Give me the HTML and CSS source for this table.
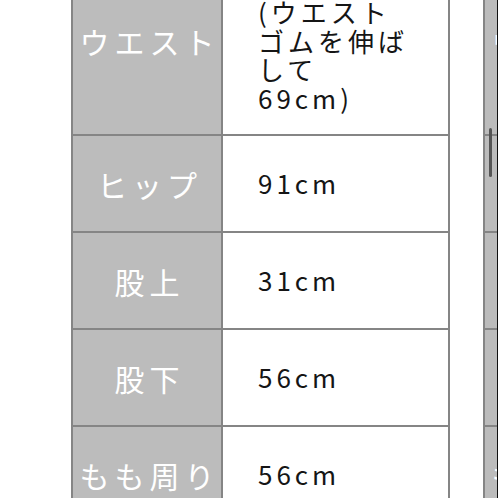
FILE: index.html
```html
<!DOCTYPE html>
<html lang="ja">
<head>
    <meta charset="UTF-8">
    <title>サイズ表</title>
    <link rel="stylesheet" href="styles.css">
</head>
<body>
<div class="page">
    <div class="size-table">
        <div class="label row-tall">ウエスト</div>
        <div class="value row-tall">62cm<br>(ウエスト<br>ゴムを伸ば<br>して<br>69cm)</div>
        <div class="label">ヒップ</div>
        <div class="value">91cm</div>
        <div class="label">股上</div>
        <div class="value">31cm</div>
        <div class="label">股下</div>
        <div class="value">56cm</div>
        <div class="label">もも周り</div>
        <div class="value">56cm</div>
    </div>
    <div class="size-table">
        <div class="label row-tall">ウエスト</div>
        <div class="value row-tall">62cm<br>(ウエスト<br>ゴムを伸ば<br>して<br>69cm)</div>
        <div class="label">ヒップ</div>
        <div class="value">91cm</div>
        <div class="label">股上</div>
        <div class="value">31cm</div>
        <div class="label">股下</div>
        <div class="value">56cm</div>
        <div class="label">もも周り</div>
        <div class="value">56cm</div>
    </div>
    <div class="scroll-thumb"></div>
    <div class="edge"></div>
</div>
</body>
</html>
```
FILE: styles.css
```css
html,body {
    margin: 0;
    padding: 0;
    background: #ffffff;
}

.page {
    position: relative;
    width: 498px;
    height: 498px;
    overflow: hidden;
    display: flex;
    align-items: flex-start;
    gap: 33px;
    padding-left: 71px;
    box-sizing: border-box;
    font-family: "Noto Sans CJK JP", "Noto Sans", sans-serif;
}

.size-table {
    flex: none;
    margin-top: -54px;
    display: grid;
    grid-template-columns: 148px 225px;
    grid-template-rows: 186px repeat(4, 95px);
    gap: 2px;
    padding: 2px;
    background: #858585;
}

.label {
    background: #bcbcbc;
    color: #ffffff;
    font-size: 30px;
    letter-spacing: 5px;
    display: flex;
    align-items: center;
    justify-content: center;
    padding-left: 5px;
    white-space: nowrap;
}

.value {
    background: #ffffff;
    color: #151515;
    font-size: 26px;
    line-height: 28.5px;
    letter-spacing: 4px;
    display: flex;
    align-items: center;
    padding-left: 35px;
}

.scroll-thumb {
    position: absolute;
    left: 489px;
    top: 128px;
    width: 3px;
    height: 49px;
    border-radius: 2px;
    background: #555555;
}

.edge {
    position: absolute;
    right: 0;
    top: 0;
    width: 1px;
    height: 100%;
    background: #111111;
}
```
